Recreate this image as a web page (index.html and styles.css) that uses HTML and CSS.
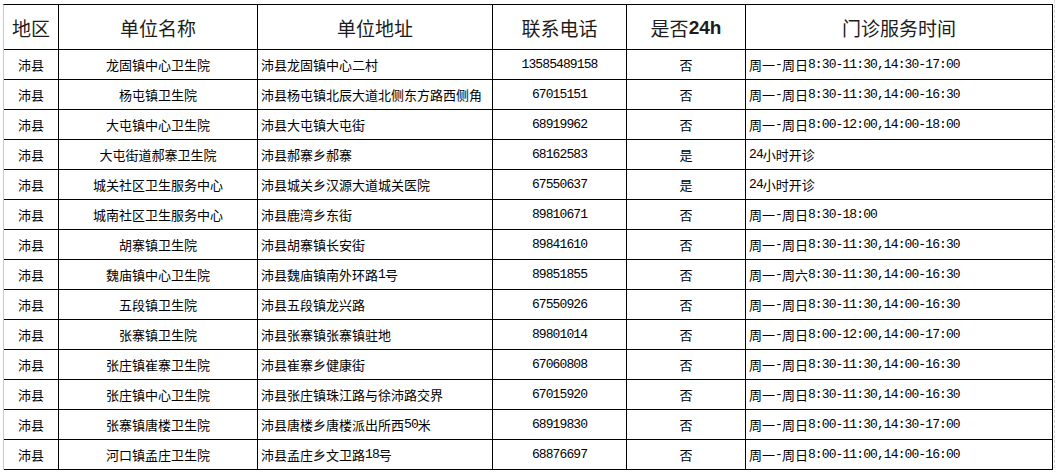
FILE: index.html
```html
<!DOCTYPE html>
<html lang="zh-CN">
<head>
<meta charset="utf-8">
<title>沛县医疗机构门诊服务时间</title>
<link rel="stylesheet" href="styles.css">
</head>
<body>
<div class="page">
  <div class="sheet">
    <div class="hd">地区</div>
    <div class="hd">单位名称</div>
    <div class="hd">单位地址</div>
    <div class="hd">联系电话</div>
    <div class="hd">是否<span class="en">24h</span></div>
    <div class="hd">门诊服务时间</div>

    <div class="c">沛县</div><div class="c">龙固镇中心卫生院</div><div class="l">沛县龙固镇中心二村</div><div class="c"><span class="n">13585489158</span></div><div class="c">否</div><div class="l">周一<span class="n">-</span>周日<span class="n">8:30-11:30,14:30-17:00</span></div>

    <div class="c">沛县</div><div class="c">杨屯镇卫生院</div><div class="l">沛县杨屯镇北辰大道北侧东方路西侧角</div><div class="c"><span class="n">67015151</span></div><div class="c">否</div><div class="l">周一<span class="n">-</span>周日<span class="n">8:30-11:30,14:00-16:30</span></div>

    <div class="c">沛县</div><div class="c">大屯镇中心卫生院</div><div class="l">沛县大屯镇大屯街</div><div class="c"><span class="n">68919962</span></div><div class="c">否</div><div class="l">周一<span class="n">-</span>周日<span class="n">8:00-12:00,14:00-18:00</span></div>

    <div class="c">沛县</div><div class="c">大屯街道郝寨卫生院</div><div class="l">沛县郝寨乡郝寨</div><div class="c"><span class="n">68162583</span></div><div class="c">是</div><div class="l"><span class="n">24</span>小时开诊</div>

    <div class="c">沛县</div><div class="c">城关社区卫生服务中心</div><div class="l">沛县城关乡汉源大道城关医院</div><div class="c"><span class="n">67550637</span></div><div class="c">是</div><div class="l"><span class="n">24</span>小时开诊</div>

    <div class="c">沛县</div><div class="c">城南社区卫生服务中心</div><div class="l">沛县鹿湾乡东街</div><div class="c"><span class="n">89810671</span></div><div class="c">否</div><div class="l">周一<span class="n">-</span>周日<span class="n">8:30-18:00</span></div>

    <div class="c">沛县</div><div class="c">胡寨镇卫生院</div><div class="l">沛县胡寨镇长安街</div><div class="c"><span class="n">89841610</span></div><div class="c">否</div><div class="l">周一<span class="n">-</span>周日<span class="n">8:30-11:30,14:00-16:30</span></div>

    <div class="c">沛县</div><div class="c">魏庙镇中心卫生院</div><div class="l">沛县魏庙镇南外环路<span class="n">1</span>号</div><div class="c"><span class="n">89851855</span></div><div class="c">否</div><div class="l">周一<span class="n">-</span>周六<span class="n">8:30-11:30,14:00-16:30</span></div>

    <div class="c">沛县</div><div class="c">五段镇卫生院</div><div class="l">沛县五段镇龙兴路</div><div class="c"><span class="n">67550926</span></div><div class="c">否</div><div class="l">周一<span class="n">-</span>周日<span class="n">8:30-11:30,14:00-16:30</span></div>

    <div class="c">沛县</div><div class="c">张寨镇卫生院</div><div class="l">沛县张寨镇张寨镇驻地</div><div class="c"><span class="n">89801014</span></div><div class="c">否</div><div class="l">周一<span class="n">-</span>周日<span class="n">8:00-12:00,14:00-17:00</span></div>

    <div class="c">沛县</div><div class="c">张庄镇崔寨卫生院</div><div class="l">沛县崔寨乡健康街</div><div class="c"><span class="n">67060808</span></div><div class="c">否</div><div class="l">周一<span class="n">-</span>周日<span class="n">8:30-11:30,14:00-16:30</span></div>

    <div class="c">沛县</div><div class="c">张庄镇中心卫生院</div><div class="l">沛县张庄镇珠江路与徐沛路交界</div><div class="c"><span class="n">67015920</span></div><div class="c">否</div><div class="l">周一<span class="n">-</span>周日<span class="n">8:30-11:30,14:00-16:30</span></div>

    <div class="c">沛县</div><div class="c">张寨镇唐楼卫生院</div><div class="l">沛县唐楼乡唐楼派出所西<span class="n">50</span>米</div><div class="c"><span class="n">68919830</span></div><div class="c">否</div><div class="l">周一<span class="n">-</span>周日<span class="n">8:00-11:30,14:30-17:00</span></div>

    <div class="c">沛县</div><div class="c">河口镇孟庄卫生院</div><div class="l">沛县孟庄乡文卫路<span class="n">18</span>号</div><div class="c"><span class="n">68876697</span></div><div class="c">否</div><div class="l">周一<span class="n">-</span>周日<span class="n">8:00-11:00,14:00-16:00</span></div>
  </div>
  <div class="gridline"></div>
</div>
</body>
</html>
```

FILE: styles.css
```css
html, body {
  margin: 0;
  padding: 0;
  background: #ffffff;
}

body {
  font-family: "Noto Sans CJK SC", "Liberation Sans", sans-serif;
  color: #000;
}

.page {
  display: flex;
  align-items: flex-start;
  padding: 4px 0 0 3px;
  height: 472px;
  box-sizing: border-box;
  overflow: hidden;
}

.sheet {
  display: grid;
  grid-template-columns: 55px 199px 235px 134px 119px 307px;
  grid-auto-rows: 30px;
  grid-template-rows: 45px;
  border-top: 1px solid #000;
  border-left: 1px solid #c9c9c9;
}

.sheet > div {
  box-sizing: border-box;
  border-right: 1px solid #000;
  border-bottom: 1px solid #000;
  display: flex;
  align-items: center;
  white-space: nowrap;
  overflow: hidden;
}

.hd {
  justify-content: center;
  font-size: 19px;
  color: #1c1c1c;
  line-height: 1;
}

.hd .en {
  font-family: "Liberation Sans", sans-serif;
  font-weight: bold;
  font-size: 19px;
}

.c, .l {
  font-size: 13px;
  line-height: 1;
  color: #000;
}

.c {
  justify-content: center;
}

.l {
  justify-content: flex-start;
  padding-left: 3px;
}

.n {
  font-family: "Liberation Mono", monospace;
  font-size: 13px;
  letter-spacing: -0.9px;
}

.gridline {
  width: 0;
  height: 468px;
  margin-left: 1px;
  border-left: 1px dashed #d6d6d6;
  margin-top: -4px;
}
```
